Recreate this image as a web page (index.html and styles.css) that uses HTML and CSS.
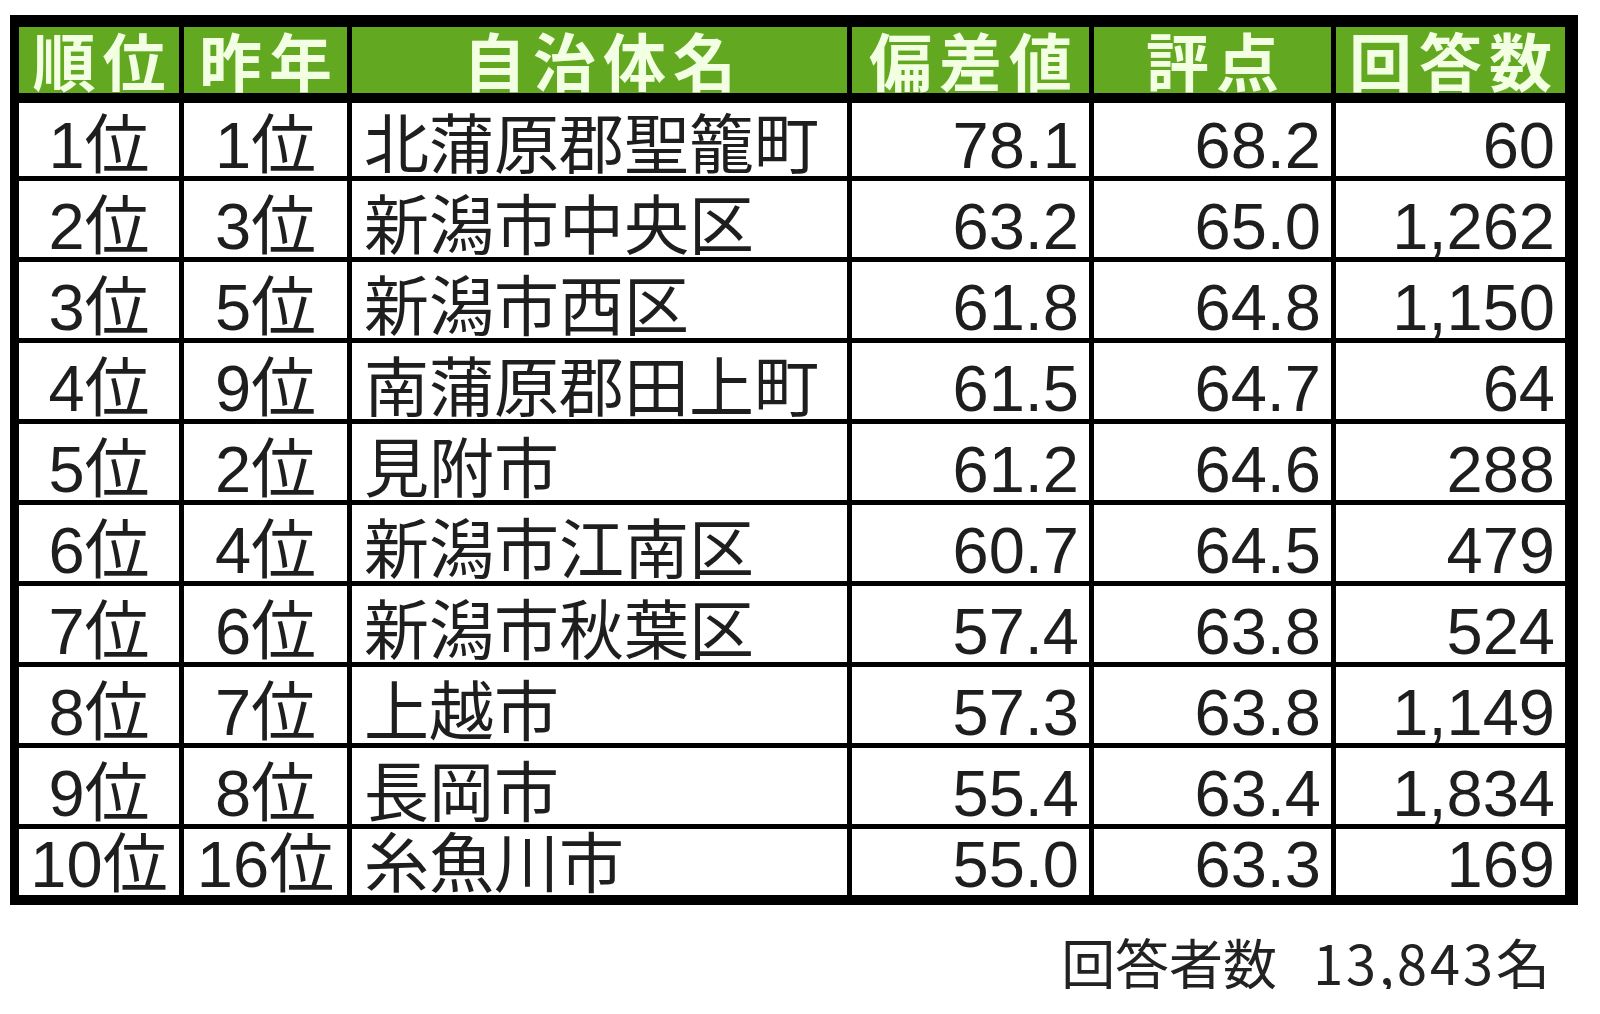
FILE: index.html
```html
<!DOCTYPE html>
<html lang="ja">
<head>
<meta charset="utf-8">
<title>ランキング</title>
<link rel="stylesheet" href="styles.css">
</head>
<body>
<div class="page">
  <div class="table">
    <div class="th">順位</div>
    <div class="th">昨年</div>
    <div class="th">自治体名</div>
    <div class="th">偏差値</div>
    <div class="th">評点</div>
    <div class="th">回答数</div>

    <div class="td c"><span>1位</span></div><div class="td c"><span>1位</span></div><div class="td l"><span>北蒲原郡聖籠町</span></div><div class="td r"><span>78.1</span></div><div class="td r"><span>68.2</span></div><div class="td r"><span>60</span></div>
    <div class="td c"><span>2位</span></div><div class="td c"><span>3位</span></div><div class="td l"><span>新潟市中央区</span></div><div class="td r"><span>63.2</span></div><div class="td r"><span>65.0</span></div><div class="td r"><span>1,262</span></div>
    <div class="td c"><span>3位</span></div><div class="td c"><span>5位</span></div><div class="td l"><span>新潟市西区</span></div><div class="td r"><span>61.8</span></div><div class="td r"><span>64.8</span></div><div class="td r"><span>1,150</span></div>
    <div class="td c"><span>4位</span></div><div class="td c"><span>9位</span></div><div class="td l"><span>南蒲原郡田上町</span></div><div class="td r"><span>61.5</span></div><div class="td r"><span>64.7</span></div><div class="td r"><span>64</span></div>
    <div class="td c"><span>5位</span></div><div class="td c"><span>2位</span></div><div class="td l"><span>見附市</span></div><div class="td r"><span>61.2</span></div><div class="td r"><span>64.6</span></div><div class="td r"><span>288</span></div>
    <div class="td c"><span>6位</span></div><div class="td c"><span>4位</span></div><div class="td l"><span>新潟市江南区</span></div><div class="td r"><span>60.7</span></div><div class="td r"><span>64.5</span></div><div class="td r"><span>479</span></div>
    <div class="td c"><span>7位</span></div><div class="td c"><span>6位</span></div><div class="td l"><span>新潟市秋葉区</span></div><div class="td r"><span>57.4</span></div><div class="td r"><span>63.8</span></div><div class="td r"><span>524</span></div>
    <div class="td c"><span>8位</span></div><div class="td c"><span>7位</span></div><div class="td l"><span>上越市</span></div><div class="td r"><span>57.3</span></div><div class="td r"><span>63.8</span></div><div class="td r"><span>1,149</span></div>
    <div class="td c"><span>9位</span></div><div class="td c"><span>8位</span></div><div class="td l"><span>長岡市</span></div><div class="td r"><span>55.4</span></div><div class="td r"><span>63.4</span></div><div class="td r"><span>1,834</span></div>
    <div class="td c"><span>10位</span></div><div class="td c"><span>16位</span></div><div class="td l"><span>糸魚川市</span></div><div class="td r"><span>55.0</span></div><div class="td r"><span>63.3</span></div><div class="td r"><span>169</span></div>
  </div>
  <div class="footer"><span>回答者数</span><span class="num">13,843名</span></div>
</div>
</body>
</html>
```

FILE: styles.css
```css
html, body {
  margin: 0;
  padding: 0;
  background: #ffffff;
}

.page {
  padding: 15px 0 0 10px;
  width: 1568px;
}

.table {
  display: grid;
  grid-template-columns: 160px 163px 495px 237px 237px 229px;
  grid-template-rows: 71px 73px repeat(8, 76px) 66px;
  column-gap: 5px;
  row-gap: 5px;
  background: #000000;
  padding: 12px 13px 10px 9px;
  width: max-content;
}

.th {
  align-self: start;
  height: 66px;
  background: #62a821;
  color: #f3ffe2;
  font-family: "Noto Sans CJK JP", "Noto Sans", sans-serif;
  font-weight: 700;
  font-size: 63px;
  line-height: 64px;
  letter-spacing: 7px;
  padding-left: 7px;
  text-align: center;
  white-space: nowrap;
}

.td {
  background: #ffffff;
  color: #1e1e1e;
  display: flex;
  align-items: flex-end;
  white-space: nowrap;
  font-family: "Liberation Sans", "Noto Sans CJK JP", sans-serif;
  font-size: 65px;
  line-height: 60px;
}

.c {
  justify-content: center;
}

.l {
  justify-content: flex-start;
  padding-left: 12px;
}

.r {
  justify-content: flex-end;
  padding-right: 10px;
}

.footer {
  margin-top: 30px;
  padding-right: 25px;
  text-align: right;
  font-family: "Noto Sans CJK JP", sans-serif;
  font-size: 54px;
  line-height: 54px;
  color: #222222;
}

.num {
  margin-left: 36px;
  letter-spacing: 3px;
}
```
